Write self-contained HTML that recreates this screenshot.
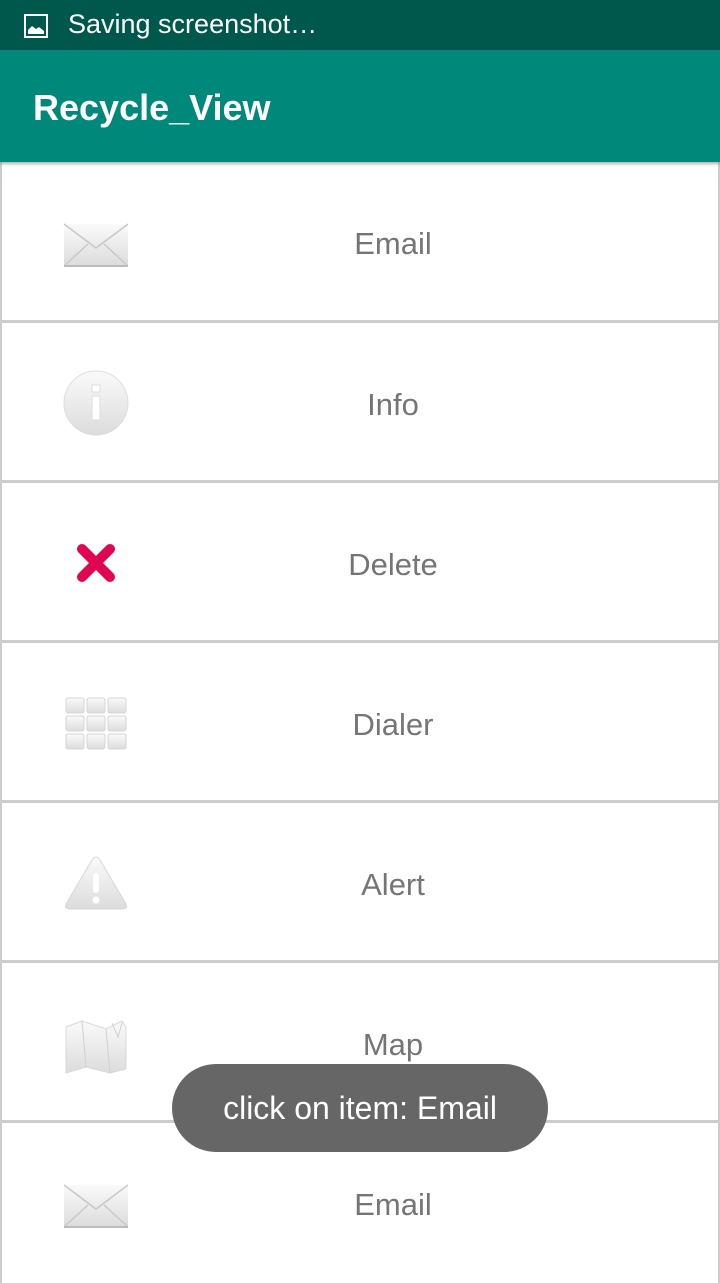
<!DOCTYPE html>
<html><head><meta charset="utf-8"><style>
*{margin:0;padding:0;box-sizing:border-box}
body{width:720px;height:1280px;overflow:hidden;background:#cccccc;font-family:"Liberation Sans",Roboto,sans-serif;position:relative}
.status{position:absolute;left:0;top:0;width:720px;height:50px;background:#00574b;color:#fff;font-size:27px}
.status span{position:absolute;left:68px;top:9px}
.bar{position:absolute;left:0;top:50px;width:720px;height:112px;background:#00897b;color:#fff;font-size:36px;font-weight:bold;box-shadow:0 2px 3px rgba(0,0,0,.3);z-index:2}
.bar span{position:absolute;left:33px;top:37px}
.row{position:absolute;left:2px;width:716px;height:158px;background:#fff}
.row .t{position:absolute;left:0;width:782px;text-align:center;top:64px;font-size:31px;color:#757575}
.row svg{position:absolute;left:58px;top:44px}
.toast{position:absolute;left:172px;top:1064px;width:376px;height:88px;border-radius:44px;background:#666;color:#fff;font-size:32px;text-align:center;line-height:88px;z-index:3}
</style></head><body>
<svg width="0" height="0" style="position:absolute"><defs><linearGradient id="g" x1="0" y1="0" x2="0" y2="1"><stop offset="0" stop-color="#fafafa"/><stop offset="1" stop-color="#dcdcdc"/></linearGradient></defs></svg>
<div class="status"><svg style="position:absolute;left:24px;top:14px" width="24" height="24" viewBox="0 0 24 24"><rect x="1" y="1" width="22" height="22" fill="none" stroke="#fff" stroke-width="2"/><path d="M4 20 L4 16 L8 12 L12 15 L15 13 L20 17 L20 20Z" fill="#fff"/></svg><span>Saving screenshot…</span></div>
<div class="bar"><span>Recycle_View</span></div>

<div class="row" style="top:162px"><svg width="72" height="72" viewBox="0 0 72 72"><path d="M4 18 L68 18 L68 60 L4 60Z" fill="url(#g)"/><path d="M4 18 L36 42 L68 18 M4 60 L28 38 M68 60 L44 38" fill="none" stroke="#c8c8c8" stroke-width="1.5"/><path d="M4 60 L68 60" stroke="#bbb" stroke-width="2"/></svg><div class="t">Email</div></div>

<div class="row" style="top:323px;height:157px"><svg width="72" height="72" viewBox="0 0 72 72"><circle cx="36" cy="36" r="32" fill="url(#g)" stroke="#ddd"/><rect x="32" y="18" width="8" height="7" fill="#fff" stroke="#ddd"/><rect x="32" y="29" width="8" height="24" fill="#fff" stroke="#ddd"/></svg><div class="t">Info</div></div>

<div class="row" style="top:483px;height:157px"><svg width="72" height="72" viewBox="0 0 72 72"><path d="M22 22 L50 50 M50 22 L22 50" stroke="#e0064f" stroke-width="10" stroke-linecap="round"/></svg><div class="t">Delete</div></div>

<div class="row" style="top:643px;height:157px"><svg width="72" height="72" viewBox="0 0 72 72"><g fill="url(#g)" stroke="#d6d6d6"><rect x="6" y="11" width="18" height="15" rx="2"/><rect x="27" y="11" width="18" height="15" rx="2"/><rect x="48" y="11" width="18" height="15" rx="2"/><rect x="6" y="29" width="18" height="15" rx="2"/><rect x="27" y="29" width="18" height="15" rx="2"/><rect x="48" y="29" width="18" height="15" rx="2"/><rect x="6" y="47" width="18" height="15" rx="2"/><rect x="27" y="47" width="18" height="15" rx="2"/><rect x="48" y="47" width="18" height="15" rx="2"/></g></svg><div class="t">Dialer</div></div>

<div class="row" style="top:803px;height:157px"><svg width="72" height="72" viewBox="0 0 72 72"><path d="M36 10 Q38 10 40 13 L66 57 Q68 62 62 62 L10 62 Q4 62 6 57 L32 13 Q34 10 36 10Z" fill="url(#g)" stroke="#d8d8d8"/><rect x="33" y="26" width="6" height="20" rx="3" fill="#fff"/><circle cx="36" cy="53" r="3.5" fill="#fff"/></svg><div class="t">Alert</div></div>

<div class="row" style="top:963px;height:157px"><svg width="72" height="72" viewBox="0 0 72 72"><path d="M6 20 L22 14 L46 22 L62 14 L66 20 L66 62 L50 66 L26 60 L6 66Z" fill="url(#g)" stroke="#d8d8d8"/><path d="M22 14 L26 60 M46 22 L50 66 M52 16 L58 30 L62 16" fill="none" stroke="#d0d0d0"/></svg><div class="t">Map</div></div>

<div class="row" style="top:1123px;height:160px"><svg width="72" height="72" viewBox="0 0 72 72"><path d="M4 18 L68 18 L68 60 L4 60Z" fill="url(#g)"/><path d="M4 18 L36 42 L68 18 M4 60 L28 38 M68 60 L44 38" fill="none" stroke="#c8c8c8" stroke-width="1.5"/><path d="M4 60 L68 60" stroke="#bbb" stroke-width="2"/></svg><div class="t">Email</div></div>

<div class="toast">click on item: Email</div>
</body></html>
